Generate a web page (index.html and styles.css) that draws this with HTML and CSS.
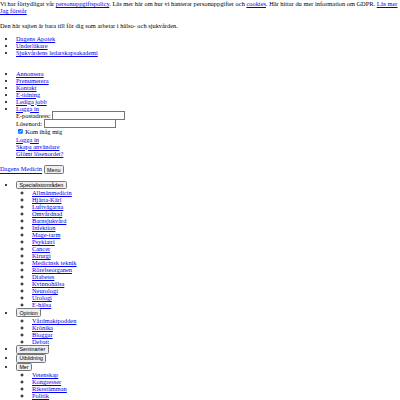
FILE: index.html
```html
<!DOCTYPE html>
<html lang="sv">
  <head>
    <meta charset="utf-8">
    <link rel="stylesheet" href="styles.css">
  </head>
  <body>
    <div class="cookie-notice">
      Vi har förtydligat vår <a href="#">personuppgiftspolicy</a>. Läs mer här om hur vi hanterar personuppgifter och <a href="#">cookies</a>. Här hittar du mer information om GDPR. <a href="#">Läs mer</a>
      <a href="#">Jag förstår</a>
    </div>

    <p class="intro">Den här sajten är bara till för dig som arbetar i hälso- och sjukvården.</p>

    <ul>
      <li><a href="#">Dagens Apotek</a></li>
      <li><a href="#">Underläkare</a></li>
      <li><a href="#">Sjukvårdens ledarskapsakademi</a></li>
    </ul>

    <div class="spacer"></div>

    <ul>
      <li><a href="#">Annonsera</a></li>
      <li><a href="#">Prenumerera</a></li>
      <li><a href="#">Kontakt</a></li>
      <li><a href="#">E-tidning</a></li>
      <li><a href="#">Lediga jobb</a></li>
      <li>
        <a href="#">Logga in</a>
        <form class="login">
          <div class="field">
            <label for="email">E-postadress:</label>
            <input type="text" id="email">
          </div>
          <div class="field">
            <label for="password">Lösenord:</label>
            <input type="password" id="password">
          </div>
          <div class="field">
            <input type="checkbox" id="remember" checked>
            <label for="remember">Kom ihåg mig</label>
          </div>
          <a href="#">Logga in</a><br>
          <a href="#">Skapa användare</a><br>
          <a href="#">Glömt lösenordet?</a>
        </form>
      </li>
    </ul>

    <div class="masthead">
      <a href="#">Dagens Medicin</a>
      <button>Menu</button>
    </div>

    <ul class="menu">
      <li>
        <button>Specialistområden</button>
        <ul>
          <li><a href="#">Allmänmedicin</a></li>
          <li><a href="#">Hjärta-Kärl</a></li>
          <li><a href="#">Luftvägarna</a></li>
          <li><a href="#">Omvårdnad</a></li>
          <li><a href="#">Barnsjukvård</a></li>
          <li><a href="#">Infektion</a></li>
          <li><a href="#">Mage-tarm</a></li>
          <li><a href="#">Psykiatri</a></li>
          <li><a href="#">Cancer</a></li>
          <li><a href="#">Kirurgi</a></li>
          <li><a href="#">Medicinsk teknik</a></li>
          <li><a href="#">Rörelseorganen</a></li>
          <li><a href="#">Diabetes</a></li>
          <li><a href="#">Kvinnohälsa</a></li>
          <li><a href="#">Neurologi</a></li>
          <li><a href="#">Urologi</a></li>
          <li><a href="#">E-hälsa</a></li>
        </ul>
      </li>
      <li>
        <button>Opinion</button>
        <ul>
          <li><a href="#">Vårdmaktpodden</a></li>
          <li><a href="#">Krönika</a></li>
          <li><a href="#">Bloggar</a></li>
          <li><a href="#">Debatt</a></li>
        </ul>
      </li>
      <li><button>Seminarier</button></li>
      <li><button>Utbildning</button></li>
      <li>
        <button>Mer</button>
        <ul>
          <li><a href="#">Vetenskap</a></li>
          <li><a href="#">Kongresser</a></li>
          <li><a href="#">Riksstämman</a></li>
          <li><a href="#">Politik</a></li>
          <li><a href="#">Ekonomi</a></li>
          <li><a href="#">Ledarskap</a></li>
        </ul>
      </li>
    </ul>
  </body>
</html>
```

FILE: styles.css
```css
html {
  zoom: 0.4;
}
body {
  margin: 0;
  font-family: "Liberation Serif", serif;
  font-size: 16px;
  color: #000;
}
.intro {
  margin: 20px 0 16px;
}
/* keeps the two link lists from sharing a margin */
.spacer {
  height: 1px;
}
.field {
  height: 20px;
  display: flex;
  align-items: center;
  gap: 4px;
}
.field input[type='checkbox'] {
  margin: 0 2px 0 4px;
}
.masthead {
  margin-top: 22px;
}
button {
  font-family: "Liberation Sans", Arial, sans-serif;
  font-size: 13.33px;
}
```
